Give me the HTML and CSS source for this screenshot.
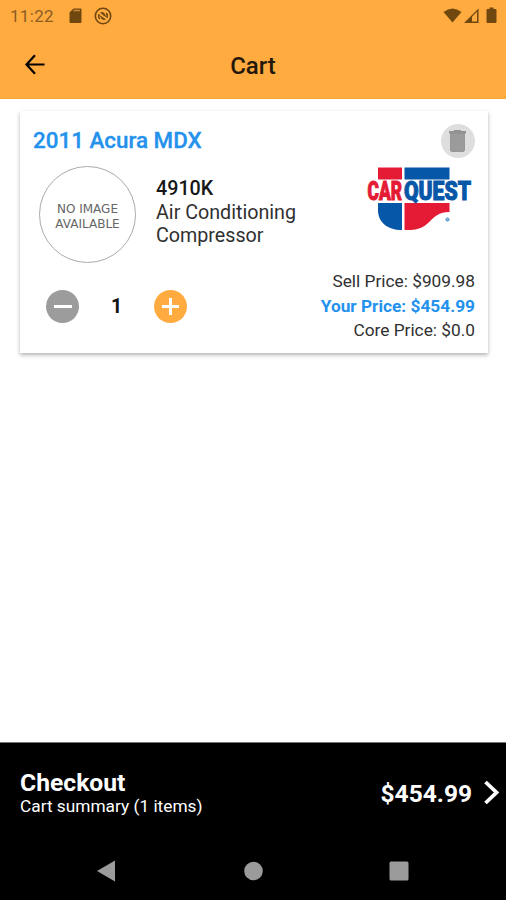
FILE: index.html
```html
<!DOCTYPE html>
<html lang="en">
<head>
<meta charset="utf-8">
<title>Cart</title>
<link rel="stylesheet" href="styles.css">
</head>
<body>
<div class="screen">
  <header class="header">
    <div class="status">
      <span class="clock">11:22</span>
      <svg class="sd" width="13" height="16" viewBox="0 0 13 16"><path d="M4.500 0.500H11.500Q12.500 0.500 12.500 1.500V14Q12.500 15 11.500 15H1.500Q0.500 15 0.500 14V4.500Z" fill="currentColor"/><path d="M4.500 2.500H11" stroke="#c98a3a" stroke-width="1.600"/></svg>
      <svg class="sync" width="18" height="18" viewBox="0 0 18 18" fill="none" stroke="currentColor"><circle cx="9" cy="9" r="7.700" stroke-width="1.600"/><path d="M5.800 12A4.300 4.300 0 0 1 5.200 7.200M12.200 6A4.300 4.300 0 0 1 12.800 10.800" stroke-width="1.500"/><path d="M6 5.500Q10 3.500 12.500 10.500L9.500 8.500ZM12 12.500Q8 14.500 5.500 8L8.500 10Z" fill="currentColor" stroke="none"/></svg>
      <svg class="signals" width="56" height="18" viewBox="0 0 56 18" fill="currentColor"><path d="M0.500 5Q9.500-2 18.500 5L9.500 15.500Z"/><path d="M21 16L35.500 1.500V16Z"/><path d="M29 9.800L34 4.800V14.500H29Z" fill="#ffab40"/><path d="M46.500 0.500H50.500V2H52.500Q53.500 2 53.500 3V15Q53.500 16 52.500 16H44.500Q43.500 16 43.500 15V3Q43.500 2 44.500 2H46.500Z"/></svg>
    </div>
    <div class="appbar">
      <svg class="back" width="22" height="22" viewBox="0 0 22 22" fill="none" stroke="#000" stroke-width="2.200"><path d="M20.500 10.500H3M11 1.300L2.500 10.500L11 19.700"/></svg>
      <h1>Cart</h1>
    </div>
  </header>
  <main>
    <section class="card">
      <div class="card-head">
        <h2>2011 Acura MDX</h2>
        <button class="trash" aria-label="Remove"><svg width="34" height="34" viewBox="0 0 34 34"><path d="M8 7H13V6H20V7H25V9.500H8Z" fill="#929292"/><path d="M9.500 9.500H23.500V26Q23.500 27.500 22 27.500H11Q9.500 27.500 9.500 26Z" fill="#9b9b9b" stroke="#8d8d8d" stroke-width=".8"/></svg></button>
      </div>
      <div class="product">
        <div class="noimage">NO IMAGE<br>AVAILABLE</div>
        <div class="details"><strong>4910K</strong><br>Air Conditioning<br>Compressor</div>
        <svg class="logo" width="108" height="66" viewBox="0 0 108 66">
          <path d="M12 1.500H36V13.500H12ZM38.500 37H83.500V46C71 46 68 52 61 58C54 64 47 64 38.500 64Z" fill="#e51b36"/>
          <path d="M38.500 1.500H83.500V13.500H38.500ZM12 37H36V64C21 64 12 56 12 44Z" fill="#0757a8"/>
          <text class="red" x="1.500" y="34" textLength="34.500" lengthAdjust="spacingAndGlyphs">CAR</text>
          <text class="blue" x="38" y="34" textLength="67" lengthAdjust="spacingAndGlyphs">QUEST</text>
          <circle cx="81.500" cy="53.500" r="1.600" fill="#8bb8dc" stroke="#4b8dc3" stroke-width="1"/>
        </svg>
      </div>
      <div class="purchase">
        <div class="quantity">
          <button class="round minus" aria-label="Decrease"></button>
          <span>1</span>
          <button class="round plus" aria-label="Increase"></button>
        </div>
        <div class="prices"><div>Sell Price: $909.98</div><div class="yours">Your Price: $454.99</div><div>Core Price: $0.0</div></div>
      </div>
    </section>
  </main>
  <footer>
    <div class="checkout">
      <div><div class="checkout-title">Checkout</div><div class="summary">Cart summary (1 items)</div></div>
      <div class="total">$454.99</div>
      <svg class="next" width="16" height="26" viewBox="0 0 16 26" fill="none" stroke="#fff" stroke-width="3.800"><path d="M1.500 2L12.500 12.500L1.500 23"/></svg>
    </div>
    <nav>
      <svg width="506" height="58" viewBox="0 0 506 58" fill="#9b9b9b"><path d="M97 29L115 18.500V39.500Z"/><circle cx="253.500" cy="29" r="9.300"/><rect x="389.500" y="19.500" width="19" height="19" rx="1.500"/></svg>
    </nav>
  </footer>
</div>
</body>
</html>
```
FILE: styles.css
```css
* { box-sizing: border-box; }
body { margin: 0; background: #fff; font-family: Roboto, sans-serif; color: #303030; }
svg { display: block; flex: none; }
button { border: 0; padding: 0; }
.screen { width: 506px; height: 900px; display: flex; flex-direction: column; overflow: hidden; }
.header { height: 99px; background: #ffab40; border-bottom: 1px solid #ffa733; }
.status { height: 32px; display: flex; align-items: center; padding: 0 7px 0 10px; color: #70470f; }
.clock { width: 59px; font-size: 17px; letter-spacing: .3px; color: #8a5d25; }
.sync { margin-left: 12px; }
.signals { margin-left: auto; }
.appbar { height: 66px; position: relative; display: flex; align-items: center; justify-content: center; }
.back { position: absolute; left: 24px; top: 22px; }
h1 { margin: 2px 0 0; font-size: 24px; line-height: 28px; font-weight: 500; color: #24180a; }
main { flex: 1; padding: 12px 18px 0 20px; }
.card { height: 242px; padding: 13px 13px 0; box-shadow: 0 2px 4px rgba(0,0,0,.3); background: #fff; }
.card-head { height: 42px; display: flex; justify-content: space-between; }
h2 { margin: 2px 0 0; font-size: 22.400px; line-height: 28px; font-weight: 500; color: #2492ec; -webkit-text-stroke: .3px #2492ec; }
.trash { width: 34px; height: 34px; border-radius: 50%; background: #dedede; }
.product { height: 98px; display: flex; align-items: flex-start; }
.noimage { width: 97px; height: 97px; margin-left: 6px; border: 1.500px solid #aaa; border-radius: 50%; display: grid; place-content: center; text-align: center; font: 12px/15px "DejaVu Sans", sans-serif; color: #666; padding-top: 5px; }
.details { margin: 11px 0 0 20px; font-size: 19.700px; line-height: 23.500px; }
.details strong { font-weight: 500; color: #161616; }
.logo { margin-left: auto; margin-right: 1px; overflow: visible; }
.logo text { font: 900 25px Roboto, sans-serif; stroke-width: 1px; }
.red { fill: #e51b36; stroke: #e51b36; }
.blue { fill: #0757a8; stroke: #0757a8; }
.purchase { height: 88px; display: flex; justify-content: space-between; }
.quantity { width: 141px; height: 33px; margin: 26px 0 0 13px; display: flex; justify-content: space-between; align-items: center; font-weight: 700; font-size: 19.500px; color: #111; }
.round { width: 33px; height: 33px; border-radius: 50%; }
.minus { background: linear-gradient(#fff, #fff) center / 18px 3px no-repeat #9c9c9c; }
.plus { background: linear-gradient(#fff, #fff) center / 17px 3px no-repeat, linear-gradient(#fff, #fff) center / 3px 17px no-repeat #ffab40; }
.prices { margin-top: 5px; text-align: right; font-size: 17.300px; line-height: 24.500px; }
.yours { color: #2492ec; font-weight: 700; }
footer { height: 158px; background: #000; border-top: 1px solid #777; color: #fff; }
.checkout { height: 99px; display: flex; align-items: center; padding: 1px 6px 0 20px; }
.checkout-title { font-size: 24.700px; line-height: 26px; font-weight: 700; }
.summary { font-size: 17.300px; line-height: 20px; }
.total { margin-left: auto; font-size: 24.500px; font-weight: 700; }
.next { margin-left: 12px; }
```
